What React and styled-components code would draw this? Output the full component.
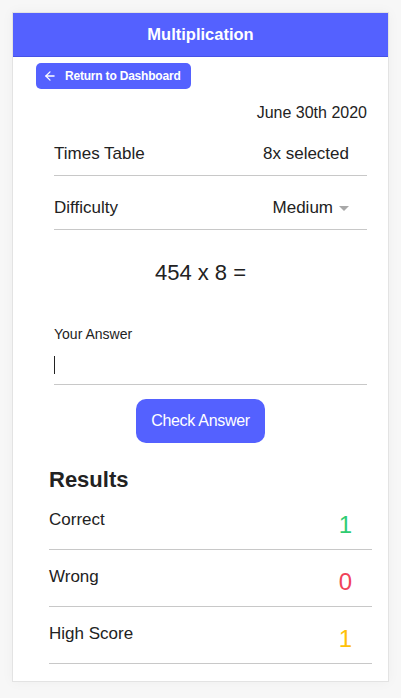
import React from 'react'
import styled, { createGlobalStyle } from 'styled-components'
import { ArrowLeft } from 'lucide-react'

const GlobalStyle = createGlobalStyle`
    body {
        margin: 0;
        background: #f7f7f7;
        font-family: "Liberation Sans", Arial, sans-serif;
        color: #222;
    }
`;

const Page = styled.div`
    padding: 12px 12px 17px 12px;
`;

const Card = styled.div`
    width: 375px;
    background: white;
    border: 1px solid #e3e3e3;
    box-shadow: 0 0 12px rgba(0, 0, 0, 0.04);
    padding-bottom: 17px;
`;

const Header = styled.div`
    height: 43px;
    background: #5461ff;
    border-bottom: 1px solid #4652e6;
    display: flex;
    align-items: center;
    justify-content: center;
    color: white;
    font-weight: bold;
    font-size: 16.5px;
`;

const BackButton = styled.button`
    display: flex;
    align-items: center;
    gap: 8px;
    margin: 6px 0 0 23px;
    height: 26px;
    padding: 0 10px 0 7px;
    border: none;
    border-radius: 5px;
    background: #5461ff;
    color: white;
    font-family: "Liberation Sans", Arial, sans-serif;
    font-size: 12px;
    font-weight: 600;
    letter-spacing: -0.2px;
`;

const DateLine = styled.div`
    text-align: right;
    padding-right: 21px;
    margin-top: 14px;
    font-size: 16px;
    line-height: 19px;
`;

const Settings = styled.div`
    padding: 0 21px 0 41px;
`;

const SettingRow = styled.div`
    display: flex;
    justify-content: space-between;
    align-items: center;
    height: 43px;
    margin-top: 10px;
    padding-right: 18px;
    border-bottom: 1px solid #c8c8c8;
    font-size: 17px;
`;

const SelectValue = styled.div`
    display: flex;
    align-items: center;
    gap: 6px;
`;

const Caret = styled.span`
    width: 0;
    height: 0;
    border-left: 5px solid transparent;
    border-right: 5px solid transparent;
    border-top: 5px solid #a8a8a8;
    margin-top: 1px;
`;

const Problem = styled.div`
    text-align: center;
    margin-top: 30px;
    padding-right: 20px;
    font-size: 22px;
    line-height: 26px;
`;

const Label = styled.div`
    margin-top: 40px;
    font-size: 14px;
    line-height: 16px;
`;

const InputWrap = styled.div`
    position: relative;
`;

const AnswerInput = styled.input`
    display: block;
    width: 100%;
    box-sizing: border-box;
    height: 43px;
    border: none;
    border-bottom: 1px solid #c8c8c8;
    outline: none;
    padding: 0;
    font-size: 16px;
    font-family: "Liberation Sans", Arial, sans-serif;
`;

const TextCursor = styled.span`
    position: absolute;
    left: 0;
    top: 14px;
    width: 1px;
    height: 18px;
    background: #222;
`;

const CheckButton = styled.button`
    display: block;
    margin: 14px auto 0 auto;
    width: 129px;
    height: 44px;
    border: none;
    border-radius: 10px;
    background: #5461ff;
    color: white;
    font-size: 16px;
    font-family: "Liberation Sans", Arial, sans-serif;
    letter-spacing: -0.3px;
    position: relative;
    left: -10px;
`;

const Results = styled.div`
    padding: 0 16px 0 36px;
    margin-top: 24px;
`;

const ResultsTitle = styled.h2`
    margin: 0;
    font-size: 22px;
    line-height: 26px;
    font-weight: bold;
`;

const ResultRow = styled.div`
    display: flex;
    justify-content: space-between;
    align-items: center;
    height: 56px;
    border-bottom: 1px solid #c8c8c8;
    font-size: 17px;
`;

const ResultLabel = styled.span`
    padding-bottom: 2px;
`;

const ResultValue = styled.span`
    font-size: 24px;
    padding-top: 8px;
    margin-right: 20px;
    color: ${props => props.color};
`;

const results = [
    { label: 'Correct', value: 1, color: '#2ecc71' },
    { label: 'Wrong', value: 0, color: '#f0435a' },
    { label: 'High Score', value: 1, color: '#ffc107' },
]

const App = () => {
    return (
        <Page>
            <GlobalStyle />
            <Card>
                <Header>Multiplication</Header>
                <BackButton>
                    <ArrowLeft size={14} strokeWidth={2.2} />
                    Return to Dashboard
                </BackButton>
                <DateLine>June 30th 2020</DateLine>
                <Settings>
                    <SettingRow>
                        <span>Times Table</span>
                        <span>8x selected</span>
                    </SettingRow>
                    <SettingRow>
                        <span>Difficulty</span>
                        <SelectValue>Medium <Caret /></SelectValue>
                    </SettingRow>
                    <Problem>454 x 8 =</Problem>
                    <Label>Your Answer</Label>
                    <InputWrap>
                        <AnswerInput type="text" />
                        <TextCursor />
                    </InputWrap>
                    <CheckButton>Check Answer</CheckButton>
                </Settings>
                <Results>
                    <ResultsTitle>Results</ResultsTitle>
                    {results.map(r => (
                        <ResultRow key={r.label}>
                            <ResultLabel>{r.label}</ResultLabel>
                            <ResultValue color={r.color}>{r.value}</ResultValue>
                        </ResultRow>
                    ))}
                </Results>
            </Card>
        </Page>
    )
}

export default App
